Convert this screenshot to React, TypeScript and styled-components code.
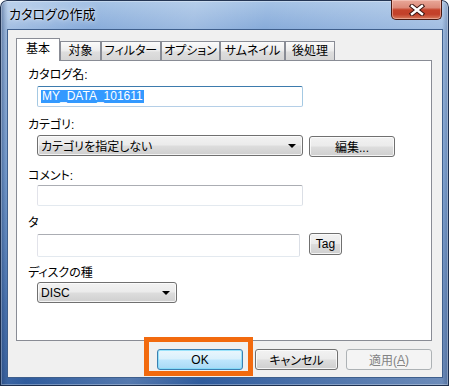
import React from "react";
import styled, { createGlobalStyle } from "styled-components";

const GlobalStyle = createGlobalStyle`
  html, body { margin: 0; padding: 0; }
  body {
    font-family: "Liberation Sans", "Noto Sans CJK JP", sans-serif;
    font-size: 12px;
    font-feature-settings: "palt";
    overflow: hidden;
    background: #ffffff;
  }
  * { box-sizing: border-box; }
`;

const Window = styled.div`
  width: 449px;
  height: 386px;
  display: flex;
  flex-direction: column;
  padding: 0 6px 8px 7px;
  border-radius: 7px 7px 0 0;
  background:
    linear-gradient(90deg, rgba(20, 50, 100, 0.55) 0px, rgba(20, 50, 100, 0.15) 5px, rgba(20, 50, 100, 0) 8px, rgba(20, 50, 100, 0) calc(100% - 7px), rgba(20, 50, 100, 0.35) 100%),
    linear-gradient(100deg, rgba(255,255,255,0.28) 0%, rgba(255,255,255,0) 18%, rgba(255,255,255,0.18) 38%, rgba(255,255,255,0) 52%, rgba(255,255,255,0.12) 70%, rgba(255,255,255,0.3) 100%),
    linear-gradient(180deg, #a7c4e6 0%, #86aad9 8%, #5f8dc9 45%, #3a68aa 80%, #2f5b9c 100%);
  box-shadow: inset 0 0 0 1px rgba(18, 36, 66, 0.9), inset 0 0 0 2px rgba(255, 255, 255, 0.3);
`;

const TitleBar = styled.div`
  height: 29px;
  flex: none;
  display: flex;
  align-items: flex-start;
  justify-content: space-between;
`;

const Title = styled.div`
  margin: 6px 0 0 2px;
  font-size: 13px;
  line-height: 18px;
  color: #000;
  text-shadow: 0 0 6px rgba(255, 255, 255, 0.8), 0 0 2px rgba(255, 255, 255, 0.6);
`;

const CloseButton = styled.div`
  width: 51px;
  height: 20px;
  margin-right: 1px;
  display: flex;
  align-items: center;
  justify-content: center;
  border: 1px solid #4a1a12;
  border-top: none;
  border-radius: 0 0 5px 5px;
  background: linear-gradient(180deg, #e9a899 0%, #dc8a79 40%, #c5432b 52%, #c2402a 75%, #d77a5c 100%);
  box-shadow: inset 0 0 0 1px rgba(255, 220, 210, 0.45);
`;

const Client = styled.div`
  flex: 1;
  display: flex;
  flex-direction: column;
  border: 1px solid #3f5f8c;
  background: #f0f0f0;
  padding: 8px 10px 7px 8px;
`;

const TabRow = styled.div`
  height: 22px;
  flex: none;
  display: flex;
  align-items: flex-end;
`;

const Tab = styled.div<{ $w: number; $active?: boolean }>`
  width: ${(p) => p.$w}px;
  height: ${(p) => (p.$active ? 23 : 19)}px;
  margin-bottom: ${(p) => (p.$active ? -1 : 0)}px;
  position: relative;
  z-index: ${(p) => (p.$active ? 2 : 1)};
  display: flex;
  align-items: center;
  justify-content: center;
  padding-bottom: ${(p) => (p.$active ? 3 : 0)}px;
  border: 1px solid #898c95;
  border-bottom: none;
  background: ${(p) =>
    p.$active ? "#ffffff" : "linear-gradient(180deg, #fbfbfb 0%, #ececec 50%, #dedede 55%, #d6d6d6 100%)"};
  color: #000;
  font-size: 12px;
  line-height: 14px;
  white-space: nowrap;
`;

const Panel = styled.div`
  height: 281px;
  flex: none;
  display: flex;
  flex-direction: column;
  border: 1px solid #898c95;
  background: #ffffff;
  padding: 0 0 0 11px;
`;

const Label = styled.div<{ $mt: number }>`
  margin-top: ${(p) => p.$mt}px;
  height: 16px;
  line-height: 16px;
  font-size: 12px;
  color: #000;
  white-space: nowrap;
`;

const Row = styled.div<{ $mt: number }>`
  margin-top: ${(p) => p.$mt}px;
  margin-left: 9px;
  display: flex;
  align-items: flex-start;
`;

const TextBox = styled.div<{ $w: number; $h: number; $focused?: boolean; $mt?: number }>`
  width: ${(p) => p.$w}px;
  height: ${(p) => p.$h}px;
  margin-top: ${(p) => p.$mt ?? 0}px;
  display: flex;
  align-items: center;
  padding-left: 3px;
  background: #fff;
  border: 1px solid;
  border-radius: 2px;
  border-color: ${(p) =>
    p.$focused ? "#3d7bad #a4c9e3 #b5cfe7 #a4c9e3" : "#abadb3 #dbdfe6 #e3e9ef #e2e3ea"};
`;

const Selected = styled.span`
  background: #3399ff;
  color: #fff;
  line-height: 13px;
  padding: 0 1px;
`;

const Combo = styled.div<{ $w: number }>`
  width: ${(p) => p.$w}px;
  height: 21px;
  display: flex;
  align-items: center;
  justify-content: space-between;
  padding: 0 6px 0 3px;
  border: 1px solid #707070;
  border-radius: 3px;
  background: linear-gradient(180deg, #f2f2f2 0%, #ebebeb 48%, #dddddd 52%, #cfcfcf 100%);
  box-shadow: inset 0 0 0 1px rgba(252, 252, 252, 0.8);
  color: #000;
  white-space: nowrap;
`;

const Arrow = styled.span`
  width: 0;
  height: 0;
  border-left: 4px solid transparent;
  border-right: 4px solid transparent;
  border-top: 4px solid #000;
`;

const Button = styled.div<{ $w: number; $h?: number; $ml?: number; $mt?: number; $variant?: "default" | "disabled" }>`
  width: ${(p) => p.$w}px;
  height: ${(p) => p.$h ?? 21}px;
  margin-left: ${(p) => p.$ml ?? 0}px;
  margin-top: ${(p) => p.$mt ?? 0}px;
  display: flex;
  align-items: center;
  justify-content: center;
  border: 1px solid
    ${(p) => (p.$variant === "default" ? "#3c7fb1" : p.$variant === "disabled" ? "#adb2b5" : "#707070")};
  border-radius: 3px;
  background: ${(p) =>
    p.$variant === "default"
      ? "linear-gradient(180deg, #eaf6fd 0%, #d9f0fc 48%, #bee6fd 52%, #a7d9f5 100%)"
      : p.$variant === "disabled"
      ? "#f4f4f4"
      : "linear-gradient(180deg, #f2f2f2 0%, #ebebeb 48%, #dddddd 52%, #cfcfcf 100%)"};
  box-shadow: inset 0 0 0 1px
    ${(p) => (p.$variant === "default" ? "rgba(120, 220, 250, 0.7)" : p.$variant === "disabled" ? "transparent" : "rgba(252,252,252,0.8)")};
  color: ${(p) => (p.$variant === "disabled" ? "#838383" : "#000")};
  font-size: 12px;
  white-space: nowrap;
`;

const ButtonRow = styled.div`
  margin-top: 8px;
  display: flex;
  justify-content: flex-end;
`;

const Highlight = styled.div`
  position: relative;
  &::after {
    content: "";
    position: absolute;
    left: -13px;
    right: -10px;
    top: -12px;
    bottom: -6px;
    border: 5px solid #f26a0e;
    pointer-events: none;
  }
`;

const Underline = styled.span`
  text-decoration: underline;
`;

const CloseGlyph = () => (
  <svg width="16" height="12" viewBox="0 0 16 12">
    <path d="M3 2 L13 10 M13 2 L3 10" stroke="#3b1410" strokeWidth="4.4" strokeLinecap="square" fill="none" />
    <path d="M3 2 L13 10 M13 2 L3 10" stroke="#ffffff" strokeWidth="2.4" strokeLinecap="square" fill="none" />
  </svg>
);

export default function App() {
  return (
    <>
      <GlobalStyle />
      <Window>
        <TitleBar>
          <Title>カタログの作成</Title>
          <CloseButton>
            <CloseGlyph />
          </CloseButton>
        </TitleBar>
        <Client>
          <TabRow>
            <Tab $w={44} $active>基本</Tab>
            <Tab $w={41}>対象</Tab>
            <Tab $w={60}>フィルター</Tab>
            <Tab $w={59}>オプション</Tab>
            <Tab $w={65}>サムネイル</Tab>
            <Tab $w={50}>後処理</Tab>
          </TabRow>
          <Panel>
            <Label $mt={6}>カタログ名:</Label>
            <Row $mt={3}>
              <TextBox $w={266} $h={21} $focused>
                <Selected>MY_DATA_101611</Selected>
              </TextBox>
            </Row>
            <Label $mt={10}>カテゴリ:</Label>
            <Row $mt={2}>
              <Combo $w={266}>
                <span>カテゴリを指定しない</span>
                <Arrow />
              </Combo>
              <Button $w={86} $ml={6} $mt={1}>編集...</Button>
            </Row>
            <Label $mt={11}>コメント:</Label>
            <Row $mt={1}>
              <TextBox $w={266} $h={21} />
            </Row>
            <Label $mt={9}>タ</Label>
            <Row $mt={2}>
              <TextBox $w={263} $h={23} $mt={1} />
              <Button $w={33} $h={22} $ml={9}>Tag</Button>
            </Row>
            <Label $mt={8}>ディスクの種</Label>
            <Row $mt={1}>
              <Combo $w={140}>
                <span>DISC</span>
                <Arrow />
              </Combo>
            </Row>
          </Panel>
          <ButtonRow>
            <Highlight>
              <Button $w={86} $variant="default">OK</Button>
            </Highlight>
            <Button $w={83} $ml={12}>キャンセル</Button>
            <Button $w={86} $ml={8} $variant="disabled">
              適用(<Underline>A</Underline>)
            </Button>
          </ButtonRow>
        </Client>
      </Window>
    </>
  );
}
